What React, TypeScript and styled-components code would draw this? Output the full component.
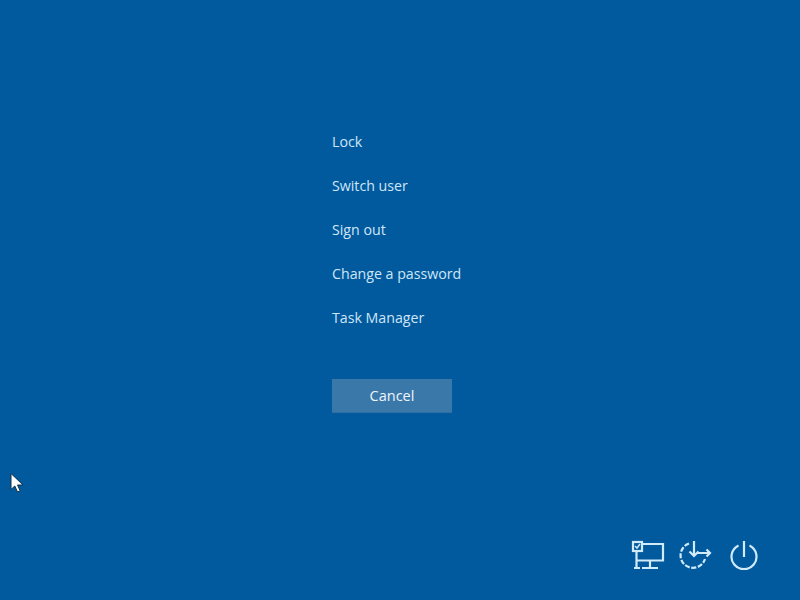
import styled, { createGlobalStyle } from "styled-components";

const GlobalStyle = createGlobalStyle`
  html, body {
    margin: 0;
    padding: 0;
    background: #015a9e;
  }
`;

const Screen = styled.div`
  position: relative;
  width: 800px;
  height: 600px;
  overflow: hidden;
  display: flex;
  flex-direction: column;
  background: #015a9e;
  font-family: "Open Sans", "Liberation Sans", sans-serif;
`;

const Menu = styled.nav`
  display: flex;
  flex-direction: column;
  align-items: flex-start;
  padding: 120px 0 0 332px;
`;

const MenuItem = styled.div`
  height: 44px;
  line-height: 43px;
  font-size: 14.2px;
  color: #cfe6f7;
`;

const CancelButton = styled.div`
  box-sizing: border-box;
  width: 120px;
  height: 34px;
  margin-top: 39px;
  display: flex;
  align-items: center;
  justify-content: center;
  background: #3b78aa;
  border-bottom: 1px solid #2f6ea3;
  font-size: 14.5px;
  color: #eef5fb;
`;

const Tray = styled.div`
  margin-top: auto;
  display: flex;
  justify-content: flex-end;
  padding: 0 41px 30px 0;
`;

const TrayIcon = styled.svg<{ $width: number; $gap: number }>`
  display: block;
  width: ${(p) => p.$width}px;
  height: 32px;
  margin-right: ${(p) => p.$gap}px;
  fill: none;
  stroke: #d2ebfb;
  stroke-width: 2.2;
`;

const Cursor = styled.svg`
  position: absolute;
  left: 9px;
  top: 472px;
  width: 15px;
  height: 21px;
`;

const items = ["Lock", "Switch user", "Sign out", "Change a password", "Task Manager"];

function NetworkIcon() {
  return (
    <TrayIcon $width={34} $gap={14} viewBox="0 0 34 32">
      <path d="M11 6h21v16.500H5.500M5.500 13v17M3 30h6M19 22.500v7.500M11 30h16" />
      <rect x="2" y="4" width="9" height="9" />
      <path d="M4 8l2 2 3-4" strokeWidth="1.5" />
    </TrayIcon>
  );
}

function AccessIcon() {
  return (
    <TrayIcon $width={34} $gap={16} viewBox="0 0 34 32">
      <path d="M10 5.500A12.500 12.500 0 1 0 26 21" strokeDasharray="5 1.600" />
      <path d="M15 3v15M10.500 13.500l4.500 4.500 4.500-4.500M18 15h13M27.500 11.500l3.500 3.500-3.500 3.500" />
    </TrayIcon>
  );
}

function PowerIcon() {
  return (
    <TrayIcon $width={30} $gap={0} viewBox="0 0 30 32">
      <path d="M9.500 7.500a12.500 12.500 0 1 0 11 0M15 3v16" />
    </TrayIcon>
  );
}

export default function App() {
  return (
    <Screen>
      <GlobalStyle />
      <Menu>
        {items.map((item) => (
          <MenuItem key={item}>{item}</MenuItem>
        ))}
        <CancelButton>Cancel</CancelButton>
      </Menu>
      <Tray>
        <NetworkIcon />
        <AccessIcon />
        <PowerIcon />
      </Tray>
      <Cursor viewBox="0 0 15 21">
        <path d="M2 1.500v16l3.800-3.500 2.700 6 2.700-1.200-2.700-5.800h5.500z" fill="#fff" stroke="#10304a" strokeWidth="1" />
      </Cursor>
    </Screen>
  );
}
